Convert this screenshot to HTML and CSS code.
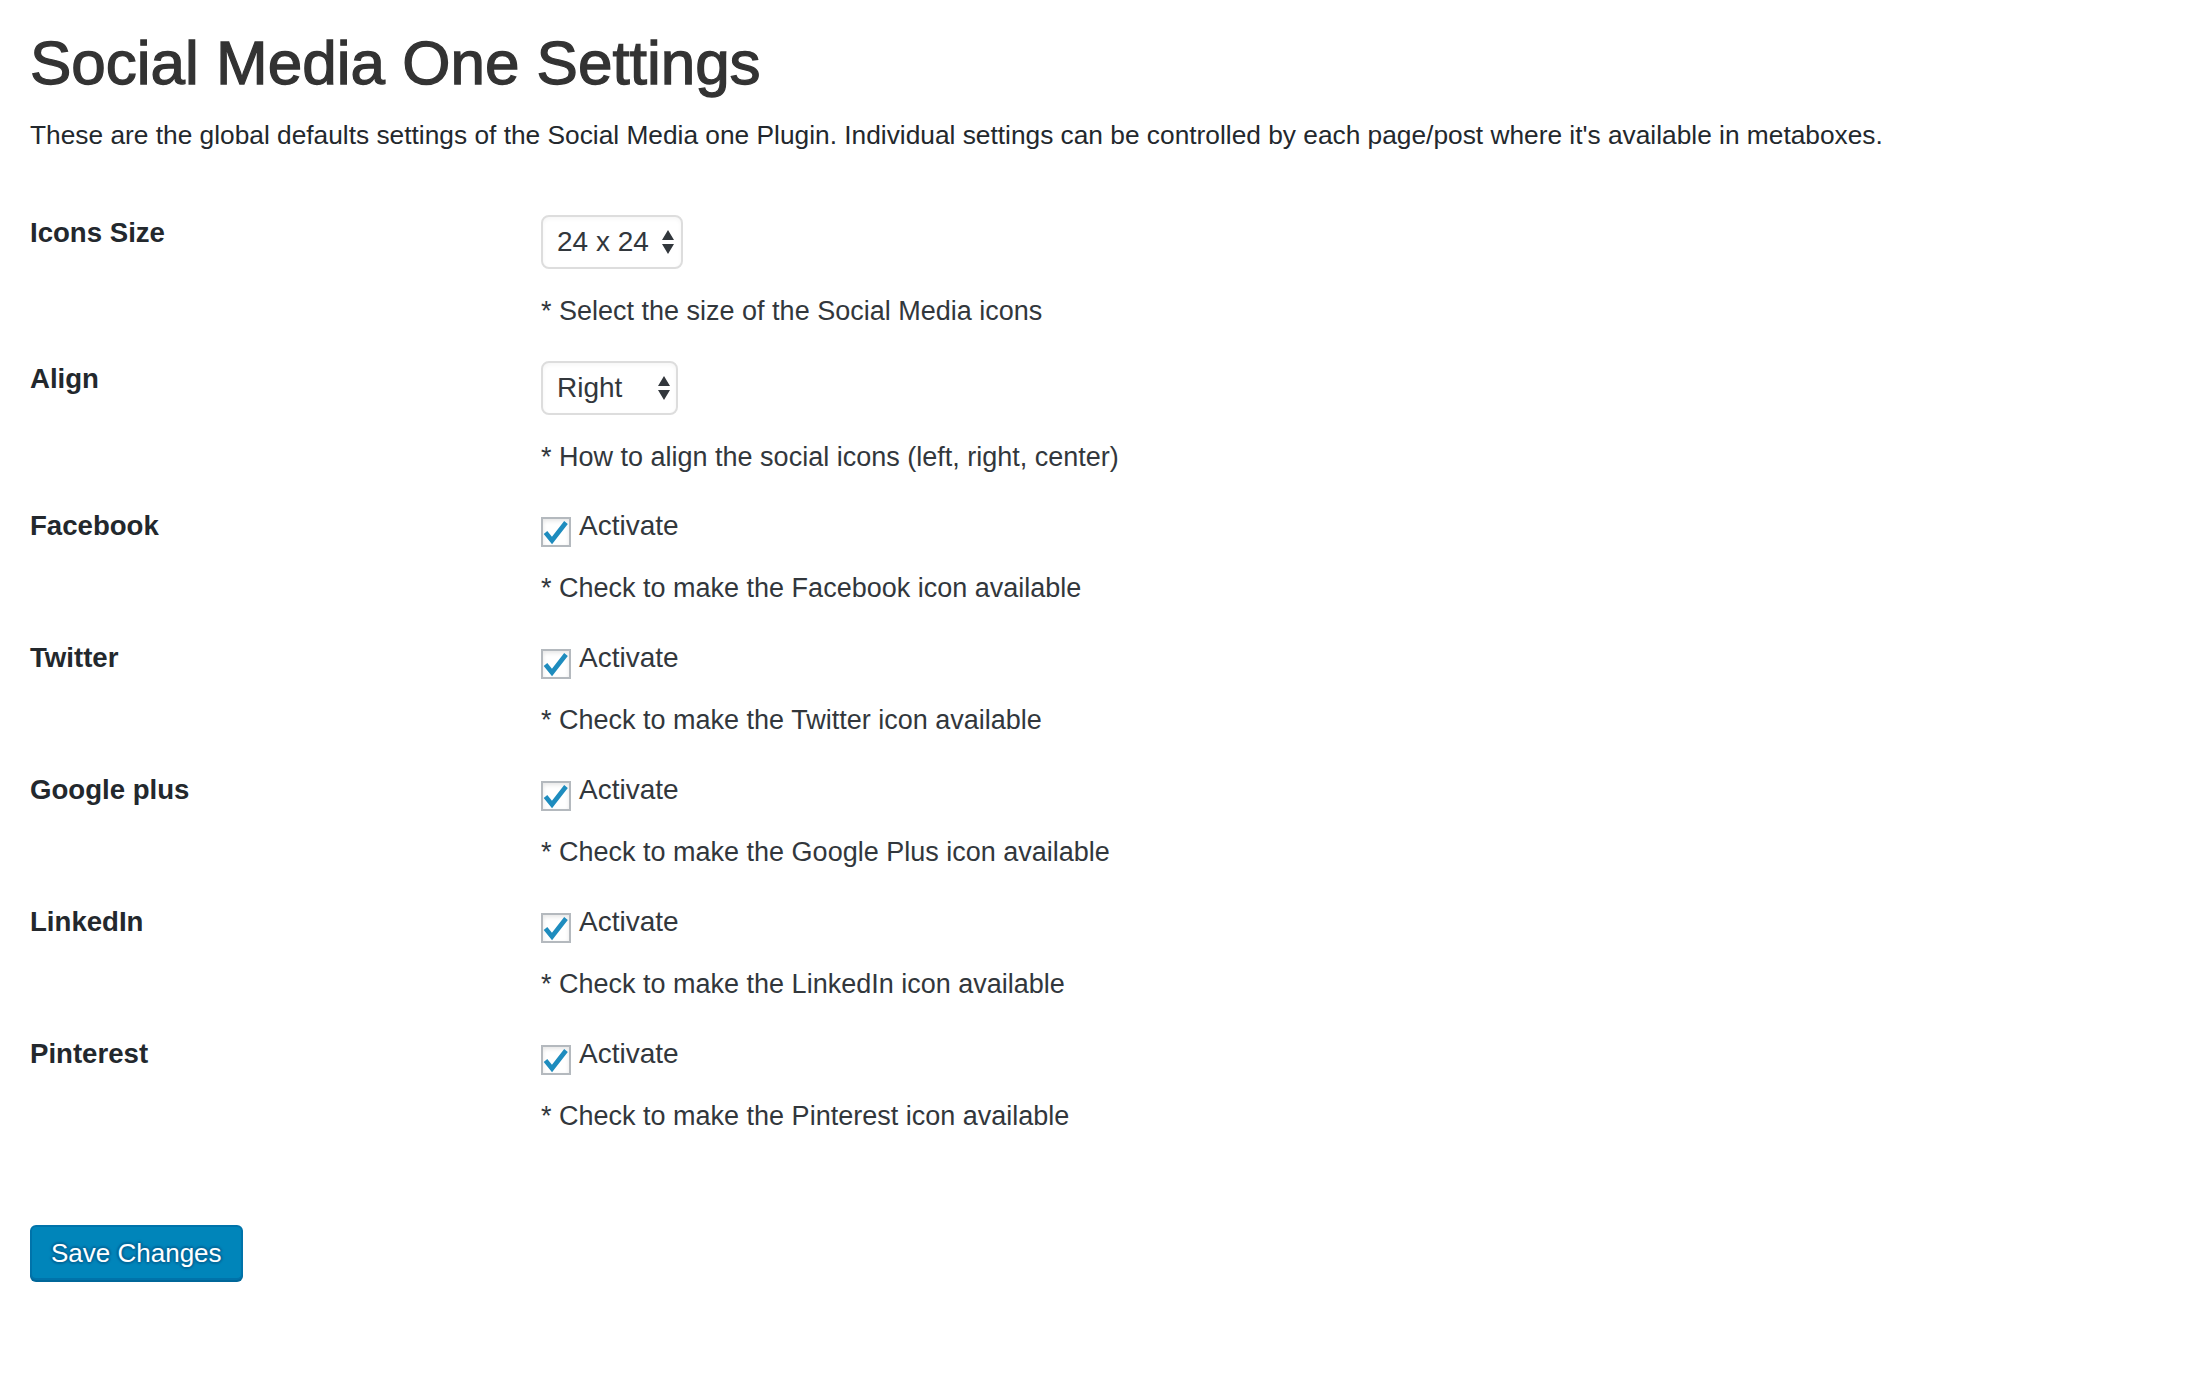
FILE: index.html
```html
<!DOCTYPE html>
<html lang="en">
<head>
<meta charset="utf-8">
<title>Social Media One Settings</title>
<link rel="stylesheet" href="styles.css">
</head>
<body>
<div class="wrap">
  <h1 class="title">Social Media One Settings</h1>
  <p class="intro">These are the global defaults settings of the Social Media one Plugin. Individual settings can be controlled by each page/post where it's available in metaboxes.</p>

  <form class="settings">
    <div class="row">
      <div class="label">Icons Size</div>
      <div class="field">
        <div class="select select-size"><span>24 x 24</span><svg class="arrows" width="12" height="24" viewBox="0 0 12 24"><path d="M6 0 L12 10 L0 10 Z M0 14 L12 14 L6 24 Z"/></svg></div>
        <p class="help">* Select the size of the Social Media icons</p>
      </div>
    </div>

    <div class="row">
      <div class="label">Align</div>
      <div class="field">
        <div class="select select-align"><span>Right</span><svg class="arrows" width="12" height="24" viewBox="0 0 12 24"><path d="M6 0 L12 10 L0 10 Z M0 14 L12 14 L6 24 Z"/></svg></div>
        <p class="help">* How to align the social icons (left, right, center)</p>
      </div>
    </div>

    <div class="row row-check row-check-first">
      <div class="label">Facebook</div>
      <div class="field">
        <label class="check"><span class="box"><svg width="30" height="30" viewBox="0 0 30 30"><path d="M4.5 15.5 L11 23.5 L25 5.5"/></svg></span><span>Activate</span></label>
        <p class="help">* Check to make the Facebook icon available</p>
      </div>
    </div>

    <div class="row row-check">
      <div class="label">Twitter</div>
      <div class="field">
        <label class="check"><span class="box"><svg width="30" height="30" viewBox="0 0 30 30"><path d="M4.5 15.5 L11 23.5 L25 5.5"/></svg></span><span>Activate</span></label>
        <p class="help">* Check to make the Twitter icon available</p>
      </div>
    </div>

    <div class="row row-check">
      <div class="label">Google plus</div>
      <div class="field">
        <label class="check"><span class="box"><svg width="30" height="30" viewBox="0 0 30 30"><path d="M4.5 15.5 L11 23.5 L25 5.5"/></svg></span><span>Activate</span></label>
        <p class="help">* Check to make the Google Plus icon available</p>
      </div>
    </div>

    <div class="row row-check">
      <div class="label">LinkedIn</div>
      <div class="field">
        <label class="check"><span class="box"><svg width="30" height="30" viewBox="0 0 30 30"><path d="M4.5 15.5 L11 23.5 L25 5.5"/></svg></span><span>Activate</span></label>
        <p class="help">* Check to make the LinkedIn icon available</p>
      </div>
    </div>

    <div class="row row-check">
      <div class="label">Pinterest</div>
      <div class="field">
        <label class="check"><span class="box"><svg width="30" height="30" viewBox="0 0 30 30"><path d="M4.5 15.5 L11 23.5 L25 5.5"/></svg></span><span>Activate</span></label>
        <p class="help">* Check to make the Pinterest icon available</p>
      </div>
    </div>

    <button type="button" class="btn">Save Changes</button>
  </form>
</div>
</body>
</html>
```
FILE: styles.css
```css
html, body {
  margin: 0;
  padding: 0;
  background: #ffffff;
}

body {
  font-family: "Liberation Sans", Arial, sans-serif;
  color: #32373c;
}

.wrap {
  padding: 26px 30px 60px 30px;
}

.title {
  margin: 0;
  font-size: 62px;
  line-height: 74px;
  font-weight: 400;
  color: #333333;
  -webkit-text-stroke: 1.3px #333333;
}

.intro {
  margin: 17px 0 0 0;
  font-size: 26.3px;
  line-height: 36px;
  color: #23282d;
}

.settings {
  margin-top: 62px;
  display: flex;
  flex-direction: column;
  align-items: flex-start;
}

.row {
  display: grid;
  grid-template-columns: 511px auto;
  padding-bottom: 32px;
}

.row-check {
  padding-bottom: 34px;
}

.row-check .help {
  margin-top: 23px;
}

.row-check-first {
  padding-top: 1px;
}

.label {
  font-size: 27.6px;
  line-height: 36px;
  font-weight: 700;
  color: #23282d;
}

.field {
  display: flex;
  flex-direction: column;
  align-items: flex-start;
}

.select {
  box-sizing: border-box;
  height: 54px;
  display: flex;
  align-items: center;
  border: 2px solid #dddddd;
  border-radius: 8px;
  box-shadow: inset 0 2px 4px rgba(0, 0, 0, 0.04);
  background: #ffffff;
  font-size: 28px;
  line-height: 36px;
  color: #32373c;
}

.select-size {
  padding: 0 7px 0 14px;
  gap: 13px;
}

.select-align {
  width: 137px;
  padding: 0 6px 0 14px;
  justify-content: space-between;
}

.arrows {
  display: block;
  fill: #32373c;
}

.help {
  margin: 24px 0 0 0;
  font-size: 27px;
  line-height: 36px;
  color: #32373c;
}

.check {
  display: flex;
  align-items: flex-start;
  gap: 8px;
  font-size: 28px;
  line-height: 36px;
  color: #32373c;
}

.box {
  box-sizing: border-box;
  width: 30px;
  height: 30px;
  margin-top: 9px;
  border: 2px solid #b4b9be;
  background: #ffffff;
  box-shadow: inset 0 2px 4px rgba(0, 0, 0, 0.1);
  position: relative;
}

.box svg {
  position: absolute;
  left: -2px;
  top: -2px;
  overflow: visible;
}

.box path {
  fill: none;
  stroke: #1e8cbe;
  stroke-width: 4.6;
  stroke-linejoin: miter;
  stroke-linecap: butt;
}

.btn {
  margin-top: 57px;
  box-sizing: border-box;
  height: 55px;
  padding: 0 19px;
  font-family: "Liberation Sans", Arial, sans-serif;
  font-size: 26px;
  line-height: 36px;
  color: #ffffff;
  background: #0085ba;
  border: 2px solid #0073aa;
  border-radius: 6px;
  box-shadow: 0 2px 0 #006799;
  text-shadow: 0 -2px 2px #006799, 2px 0 2px #006799, 0 2px 2px #006799, -2px 0 2px #006799;
  cursor: pointer;
}
```
